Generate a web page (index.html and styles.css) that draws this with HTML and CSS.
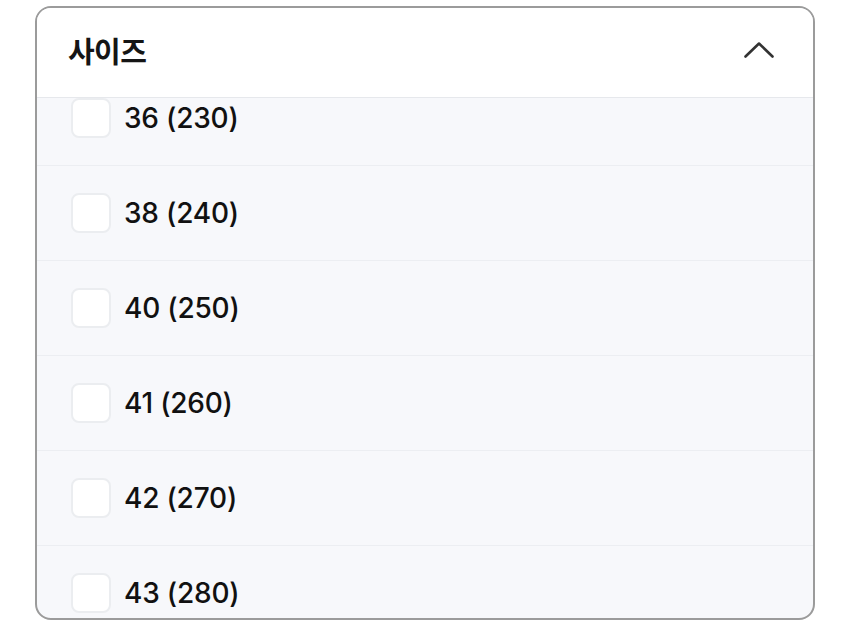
FILE: index.html
```html
<!DOCTYPE html>
<html lang="ko">
<head>
<meta charset="utf-8">
<title>사이즈</title>
<link rel="stylesheet" href="styles.css">
</head>
<body>
  <section class="filter">
    <header class="filter-head">
      <h2 class="filter-title">사이즈</h2>
      <svg class="chevron" width="36" height="24" viewBox="0 0 36 24" aria-hidden="true">
        <path d="M4.5 18.5 L18 5.5 L31.5 18.5" fill="none" stroke="#333" stroke-width="2.6" stroke-linecap="round" stroke-linejoin="round"/>
      </svg>
    </header>
    <div class="filter-body">
      <ul class="option-list">
        <li class="option"><span class="box"></span><span class="label">36 (230)</span></li>
        <li class="option"><span class="box"></span><span class="label">38 (240)</span></li>
        <li class="option"><span class="box"></span><span class="label">40 (250)</span></li>
        <li class="option"><span class="box"></span><span class="label">41 (260)</span></li>
        <li class="option"><span class="box"></span><span class="label">42 (270)</span></li>
        <li class="option"><span class="box"></span><span class="label">43 (280)</span></li>
      </ul>
    </div>
  </section>
</body>
</html>
```
FILE: styles.css
```css
* { box-sizing: border-box; }

html, body {
  margin: 0;
  padding: 0;
  background: #ffffff;
}

body {
  padding: 6px 35px 0 35px;
  font-family: Inter, "Noto Sans CJK KR", "Liberation Sans", sans-serif;
  color: #111;
}

.filter {
  width: 780px;
  height: 614px;
  border: 2px solid #9b9b9b;
  border-radius: 16px;
  overflow: hidden;
  display: flex;
  flex-direction: column;
  background: #f7f8fb;
}

.filter-head {
  flex: none;
  height: 90px;
  display: flex;
  align-items: center;
  justify-content: space-between;
  padding: 0 36px 5px 31px;
  background: #ffffff;
  border-bottom: 1px solid #e6e8ec;
}

.filter-title {
  margin: 0;
  font-family: "Noto Sans CJK KR", sans-serif;
  font-size: 29px;
  font-weight: 700;
  letter-spacing: -0.6px;
  color: #151515;
  line-height: 1;
}

.chevron { display: block; }

.filter-body {
  flex: 1;
  overflow: hidden;
}

.option-list {
  list-style: none;
  margin: -27px 0 0 0;
  padding: 0;
}

.option {
  height: 95px;
  display: flex;
  align-items: center;
  gap: 13px;
  padding-left: 34px;
  border-bottom: 1px solid #eceef2;
}

.box {
  flex: none;
  width: 40px;
  height: 40px;
  border: 2px solid #ebedf0;
  border-radius: 8px;
  background: #ffffff;
}

.label {
  font-size: 28px;
  font-weight: 450;
  letter-spacing: -0.2px;
  color: #111;
}
```
